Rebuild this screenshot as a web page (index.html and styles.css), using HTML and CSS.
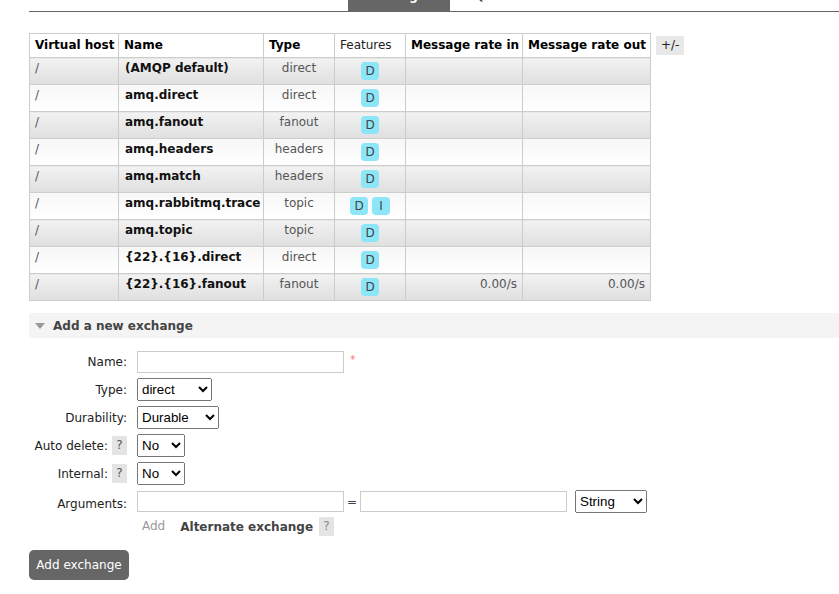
FILE: index.html
```html
<!DOCTYPE html>
<html>
<head>
<meta charset="utf-8">
<link rel="stylesheet" href="styles.css">
</head>
<body>
<nav class="tabs">
  <ul>
    <li class="tab tab-active">Exchanges</li>
    <li class="tab">Queues</li>
  </ul>
</nav>

<div class="list-wrap">
  <table class="list">
    <colgroup>
      <col class="c-vhost"><col class="c-name"><col class="c-type"><col class="c-feat"><col class="c-in"><col class="c-out">
    </colgroup>
    <thead>
      <tr>
        <th>Virtual host</th>
        <th>Name</th>
        <th>Type</th>
        <th class="plain">Features</th>
        <th>Message rate in</th>
        <th>Message rate out</th>
      </tr>
    </thead>
    <tbody>
      <tr class="alt1"><td class="vh">/</td><td class="nm">(AMQP default)</td><td class="ty">direct</td><td class="ft"><abbr class="badge">D</abbr></td><td></td><td></td></tr>
      <tr class="alt2"><td class="vh">/</td><td class="nm">amq.direct</td><td class="ty">direct</td><td class="ft"><abbr class="badge">D</abbr></td><td></td><td></td></tr>
      <tr class="alt1"><td class="vh">/</td><td class="nm">amq.fanout</td><td class="ty">fanout</td><td class="ft"><abbr class="badge">D</abbr></td><td></td><td></td></tr>
      <tr class="alt2"><td class="vh">/</td><td class="nm">amq.headers</td><td class="ty">headers</td><td class="ft"><abbr class="badge">D</abbr></td><td></td><td></td></tr>
      <tr class="alt1"><td class="vh">/</td><td class="nm">amq.match</td><td class="ty">headers</td><td class="ft"><abbr class="badge">D</abbr></td><td></td><td></td></tr>
      <tr class="alt2"><td class="vh">/</td><td class="nm">amq.rabbitmq.trace</td><td class="ty">topic</td><td class="ft"><abbr class="badge">D</abbr> <abbr class="badge">I</abbr></td><td></td><td></td></tr>
      <tr class="alt1"><td class="vh">/</td><td class="nm">amq.topic</td><td class="ty">topic</td><td class="ft"><abbr class="badge">D</abbr></td><td></td><td></td></tr>
      <tr class="alt2"><td class="vh">/</td><td class="nm">{22}.{16}.direct</td><td class="ty">direct</td><td class="ft"><abbr class="badge">D</abbr></td><td></td><td></td></tr>
      <tr class="alt1"><td class="vh">/</td><td class="nm">{22}.{16}.fanout</td><td class="ty">fanout</td><td class="ft"><abbr class="badge">D</abbr></td><td class="rate">0.00/s</td><td class="rate">0.00/s</td></tr>
    </tbody>
  </table>
  <span class="toggle">+/-</span>
</div>

<section class="section">
  <h2 class="section-head"><span class="tri"></span>Add a new exchange</h2>
  <form class="form">
    <div class="row">
      <label class="lbl">Name:</label>
      <div class="ctl"><input class="txt txt-name" type="text"><span class="req">*</span></div>
    </div>
    <div class="row">
      <label class="lbl">Type:</label>
      <div class="ctl"><select class="sel sel-type"><option>direct</option><option>fanout</option><option>headers</option><option>topic</option></select></div>
    </div>
    <div class="row">
      <label class="lbl">Durability:</label>
      <div class="ctl"><select class="sel sel-dur"><option>Durable</option><option>Transient</option></select></div>
    </div>
    <div class="row">
      <label class="lbl">Auto delete: <span class="help">?</span></label>
      <div class="ctl"><select class="sel sel-no"><option>No</option><option>Yes</option></select></div>
    </div>
    <div class="row">
      <label class="lbl">Internal: <span class="help">?</span></label>
      <div class="ctl"><select class="sel sel-no"><option>No</option><option>Yes</option></select></div>
    </div>
    <div class="row row-args">
      <label class="lbl lbl-args">Arguments:</label>
      <div class="ctl">
        <input class="txt txt-arg" type="text"><span class="eq">=</span><input class="txt txt-arg" type="text">
        <select class="sel sel-str"><option>String</option><option>Number</option><option>Boolean</option><option>List</option></select>
      </div>
    </div>
    <div class="row row-add">
      <span class="lbl"></span>
      <div class="ctl"><span class="add">Add</span><span class="alt">Alternate exchange</span><span class="help help-alt">?</span></div>
    </div>
    <button class="btn" type="button">Add exchange</button>
  </form>
</section>
</body>
</html>
```

FILE: styles.css
```css
html, body {
  margin: 0;
  padding: 0;
  background: #fff;
}
body {
  font-family: "DejaVu Sans", Verdana, sans-serif;
  font-size: 12px;
  color: #444;
}

/* top tabs, scrolled mostly out of view */
.tabs {
  margin-left: 29px;
  height: 11px;
  border-bottom: 1px solid #666;
  overflow: hidden;
}
.tabs ul {
  list-style: none;
  margin: 0;
  padding: 0 0 0 319px;
  display: flex;
  align-items: flex-end;
  height: 11px;
}
.tab {
  font-weight: bold;
  line-height: 14px;
  padding: 0 26px 8px 24px;
  color: #444;
}
.tab-active {
  background: #666;
  color: #fff;
  width: 102px;
  box-sizing: border-box;
  padding: 0 0 8px 13px;
}

/* exchanges table */
.list-wrap {
  display: flex;
  align-items: flex-start;
  gap: 5px;
  margin: 21px 0 0 29px;
}
table.list {
  border-collapse: collapse;
  table-layout: fixed;
  width: 622px;
}
.c-vhost { width: 89px; }
.c-name { width: 145px; }
.c-type { width: 71px; }
.c-feat { width: 71px; }
.c-in { width: 117px; }
.c-out { width: 128px; }

table.list th {
  border: 1px solid #ccc;
  background: #fff;
  color: #000;
  font-weight: bold;
  text-align: left;
  padding: 0 5px;
  height: 23px;
  white-space: nowrap;
  line-height: 15px;
}
table.list th.plain { font-weight: normal; color: #222; }

table.list td {
  border: 1px solid #ccc;
  padding: 3px 5px 0;
  height: 23px;
  vertical-align: top;
  line-height: 15px;
  white-space: nowrap;
}
table.list td.nm { padding-left: 6px; }
tr.alt1 td { background: linear-gradient(#f2f2f2, #dfdfdf); }
tr.alt2 td { background: linear-gradient(#f7f7f7, #ffffff); }

td.vh { color: #555; }
td.nm { color: #111; font-weight: bold; }
td.ty { color: #555; text-align: center; }
td.ft { text-align: center; }
table.list td.ft { padding-left: 2px; padding-right: 2px; }
td.rate { text-align: right; color: #555; }

.badge {
  display: inline-block;
  vertical-align: top;
  margin-top: 1px;
  background: #8ce6f7;
  color: #444;
  border-radius: 4px;
  padding: 2px 4px;
  line-height: 14px;
  min-width: 10px;
  text-decoration: none;
}

.toggle {
  margin-top: 3px;
  background: #e8e8e8;
  color: #222;
  padding: 2px 5px;
  line-height: 15px;
}

/* add section */
.section { margin-top: 12px; }
.section-head {
  margin: 0 0 0 29px;
  background: #f4f4f4;
  height: 25px;
  display: flex;
  align-items: center;
  font-size: 12px;
  font-weight: bold;
  color: #444;
  padding-left: 6px;
}
.tri {
  width: 0;
  height: 0;
  border-left: 5px solid transparent;
  border-right: 5px solid transparent;
  border-top: 6px solid #999;
  margin-right: 8px;
  margin-top: 1px;
}

.form {
  margin: 13px 0 0 0;
}
.row {
  display: flex;
  align-items: center;
  margin-bottom: 5px;
}
.lbl {
  width: 127px;
  text-align: right;
  box-sizing: border-box;
  color: #222;
  flex: none;
  display: flex;
  justify-content: flex-end;
  align-items: center;
  gap: 4px;
}
.ctl {
  margin-left: 10px;
  display: flex;
  align-items: center;
}
.txt {
  box-sizing: border-box;
  border: 1px solid #ccc;
  height: 22px;
  margin: 0;
  padding: 0 3px;
  background: #fff;
}
.txt-name { width: 207px; }
.txt-arg { width: 207px; height: 21px; }
.req {
  color: #f77;
  margin-left: 6px;
  font-size: 11px;
  align-self: flex-start;
  margin-top: 2px;
}
.sel {
  box-sizing: border-box;
  height: 23px;
  margin: 0;
  font-family: "Liberation Sans", Arial, sans-serif;
  font-size: 13.33px;
  color: #000;
}
.sel-type { width: 75px; }
.sel-dur { width: 82px; }
.sel-no { width: 48px; }
.sel-str { width: 72px; margin-left: 8px; }
.eq {
  width: 16px;
  text-align: center;
  color: #444;
}
.help {
  display: inline-block;
  background: #e4e4e4;
  color: #555;
  width: 15px;
  height: 19px;
  line-height: 19px;
  text-align: center;
}
.row-args {
  align-items: flex-start;
  margin-bottom: 4px;
  margin-top: 1px;
}
.lbl-args { padding-top: 7px; }
.row-add .ctl { margin-left: 10px; }
.add { color: #999; margin-left: 5px; margin-top: -2px; }
.alt { color: #444; font-weight: bold; font-size: 12px; margin-left: 15px; }
.help-alt { margin-left: 6px; color: #888; }

.btn {
  margin: 9px 0 0 29px;
  width: 100px;
  height: 30px;
  background: #666;
  color: #fff;
  border: none;
  border-radius: 5px;
  font-family: "DejaVu Sans", Verdana, sans-serif;
  font-size: 12px;
  padding: 0;
}
```
